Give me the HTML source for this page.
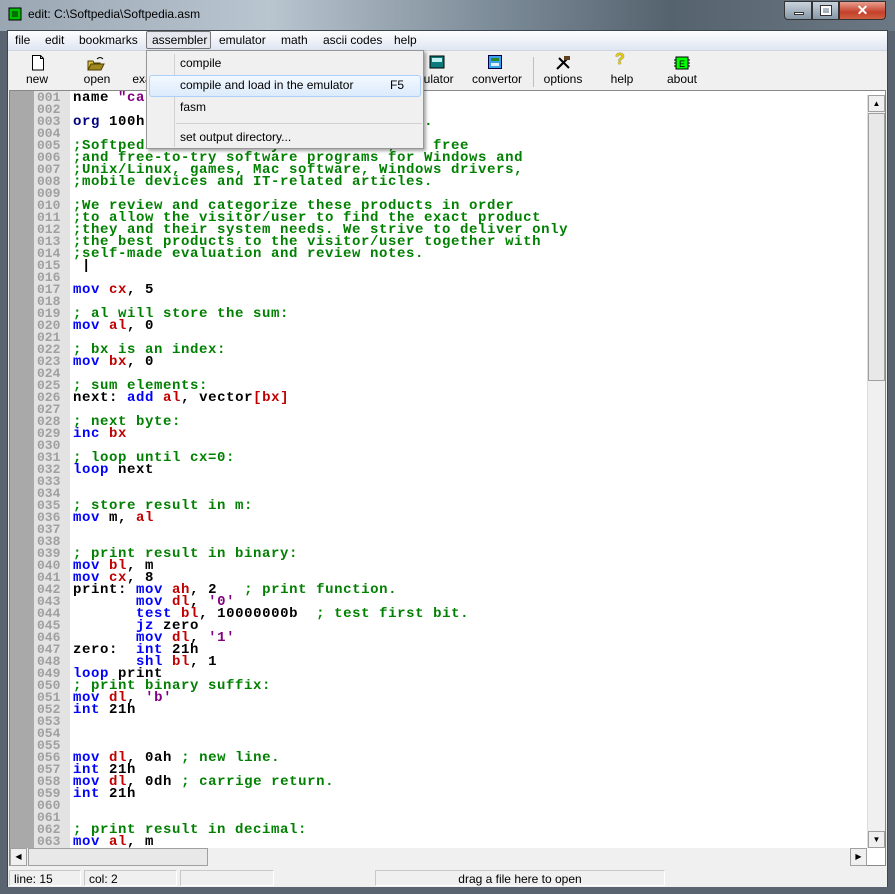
<!DOCTYPE html>
<html><head><meta charset="utf-8">
<style>
*{margin:0;padding:0;box-sizing:border-box}
body{width:895px;height:894px;overflow:hidden;background:#5a6470;font-family:"Liberation Sans",sans-serif;font-size:12px;position:relative}
.abs{position:absolute}
#title{left:0;top:0;width:895px;height:31px;background:linear-gradient(90deg,#9aa7b3 0%,#b9c5cf 30%,#7d8c99 55%,#55636f 75%,#6b7884 100%)}
#title .t{left:28px;top:7px;font-size:12px;color:#000}
#frame{left:7px;top:30px;width:881px;height:857px;background:#f0f0f0;border:1px solid #3c4650}
#menubar{left:8px;top:31px;width:879px;height:19px;background:linear-gradient(#fdfdfe,#dfe6f2);}
.mi{position:absolute;top:2px;font-size:12px;color:#000}
#toolbar{left:8px;top:50px;width:879px;height:40px;background:#f0f0f0;border-top:1px solid #cfd6e0}
.tb{position:absolute;top:21px;font-size:12px;text-align:center;width:60px;margin-left:-30px}
.ic{position:absolute;top:55px}
#ed{left:9px;top:90px;width:877px;height:776px;background:#fff;border:1px solid #888}
#gut1{left:10px;top:91px;width:24px;height:757px;background:#a9a9a9}
#gut2{left:34px;top:91px;width:36px;height:757px;background:#e3e3e3}
pre{position:absolute;font-family:"Liberation Mono",monospace;font-weight:bold;font-size:14px;line-height:12px;letter-spacing:0.6px;white-space:pre}
#nums{left:37px;top:92px;color:#a0a0a0;letter-spacing:0px;font-size:13px}
#code{left:73px;top:92px;color:#000}
.k{color:#0000ff}.r{color:#c00000}.c{color:#008000}.s{color:#800080}.d{color:#000080}
#vs{left:867px;top:95px;width:18px;height:753px;background:#f0f0f0;border-left:1px solid #ddd}
#hs{left:10px;top:848px;width:857px;height:18px;background:#f0f0f0}
.btn{position:absolute;background:#f0f0f0;border:1px solid #a0a0a0;}
#status{left:8px;top:867px;width:879px;height:20px;background:#f0f0f0}
.sp{position:absolute;top:3px;height:16px;border:1px solid #c8c8c8;border-bottom-color:#fff;border-right-color:#fff;font-size:12px;padding:1px 4px}
#dd{left:146px;top:50px;width:278px;height:99px;background:#f0f0f0;border:1px solid #979797;box-shadow:2px 2px 3px rgba(0,0,0,.35)}
#dd .it{position:absolute;left:33px;font-size:12px}
</style></head><body>
<div id="title" class="abs">
 <svg class="abs" style="left:8px;top:7px" width="14" height="14"><rect x="1" y="1" width="12" height="12" fill="#00c000" stroke="#000"/><rect x="4" y="4" width="6" height="6" fill="#007000"/></svg>
 <div class="t abs">edit: C:\Softpedia\Softpedia.asm</div>
 <div class="abs" style="left:784px;top:1px;width:28px;height:19px;border:1px solid #333;border-radius:0 0 0 4px;background:linear-gradient(#c9d3dd,#8797a6)"><div class="abs" style="left:9px;top:10px;width:10px;height:3px;background:#fff;border:1px solid #333"></div></div>
 <div class="abs" style="left:812px;top:1px;width:27px;height:19px;border:1px solid #333;background:linear-gradient(#c9d3dd,#8797a6)"><div class="abs" style="left:8px;top:4px;width:10px;height:9px;border:2px solid #fff;outline:1px solid #333"></div></div>
 <div class="abs" style="left:839px;top:1px;width:47px;height:19px;border:1px solid #333;border-radius:0 0 4px 0;background:linear-gradient(#e8a090,#c4402a 60%,#d06040);color:#fff;font-weight:bold;font-size:14px;text-align:center;line-height:17px">✕</div>
</div>
<div id="frame" class="abs"></div>
<div id="menubar" class="abs">
 <span class="mi" style="left:7px">file</span>
 <span class="mi" style="left:37px">edit</span>
 <span class="mi" style="left:71px">bookmarks</span>
 <div class="abs" style="left:138px;top:0px;width:65px;height:18px;border:1px solid #777;border-radius:2px;background:#e4e8ee"></div>
 <span class="mi" style="left:144px">assembler</span>
 <span class="mi" style="left:211px">emulator</span>
 <span class="mi" style="left:273px">math</span>
 <span class="mi" style="left:315px">ascii codes</span>
 <span class="mi" style="left:386px">help</span>
</div>
<div id="toolbar" class="abs">
 <span class="tb" style="left:29px">new</span>
 <span class="tb" style="left:89px">open</span>
 <span class="tb" style="left:150px">examples</span>
 <span class="tb" style="left:210px">compile</span>
 <span class="tb" style="left:300px">emulate</span>
 <span class="tb" style="left:420px">calculator</span>
 <span class="tb" style="left:489px">convertor</span>
 <div class="abs" style="left:525px;top:6px;width:1px;height:30px;background:#c0c0c0"></div>
 <span class="tb" style="left:555px">options</span>
 <span class="tb" style="left:614px">help</span>
 <span class="tb" style="left:674px">about</span>
</div>
<svg class="ic" style="left:31px" width="14" height="16"><path d="M1.5 .5h8l3 3v11.5h-11z" fill="#fff" stroke="#000"/><path d="M9.5 .5v3h3" fill="none" stroke="#000"/></svg>
<svg class="ic" style="left:87px" width="18" height="16"><path d="M1 6h5l1 2h6v7H1z" fill="#d8c040" stroke="#504000"/><path d="M1 15l3-6h13l-3 6z" fill="#a08820" stroke="#504000"/><path d="M10 4q3-3 6 0" fill="none" stroke="#000"/></svg>
<svg class="ic" style="left:429px" width="16" height="14"><rect x="1" y="1" width="14" height="12" fill="#0a7a7a" stroke="#000"/><rect x="3" y="3" width="10" height="4" fill="#c0f0f0"/></svg>
<svg class="ic" style="left:488px" width="14" height="14"><rect x=".5" y=".5" width="13" height="13" fill="#3aa0f0" stroke="#004"/><rect x="3" y="3" width="8" height="3" fill="#2a8a2a"/><rect x="3" y="8" width="8" height="3" fill="#e0f0ff"/></svg>
<svg class="ic" style="left:555px" width="16" height="16"><path d="M2 14L12 4M4 3l10 10" stroke="#000" stroke-width="2"/><path d="M9 1h6v4h-6z" fill="#604020"/></svg>
<div class="abs" style="left:615px;top:51px;font-weight:bold;font-size:16px;color:#e8d000;text-shadow:0 0 1px #000">?</div>
<svg class="ic" style="left:674px" width="16" height="16"><rect x="2" y="2" width="12" height="12" fill="#00ff00" stroke="#000"/><text x="5" y="12" font-size="9" font-family="Liberation Sans">E</text><path d="M0 5h2M0 8h2M0 11h2M14 5h2M14 8h2M14 11h2" stroke="#000"/></svg>
<div id="ed" class="abs"></div>
<div id="gut1" class="abs"></div>
<div id="gut2" class="abs"></div>
<pre id="nums">001
002
003
004
005
006
007
008
009
010
011
012
013
014
015
016
017
018
019
020
021
022
023
024
025
026
027
028
029
030
031
032
033
034
035
036
037
038
039
040
041
042
043
044
045
046
047
048
049
050
051
052
053
054
055
056
057
058
059
060
061
062
063</pre>
<pre id="code">name <span class="s">"calc-sum"</span>

<span class="d">org</span> 100h <span class="c">; directive make tiny com file.</span>

<span class="c">;Softpedia is a library of over 500,000 free
;and free-to-try software programs for Windows and
;Unix/Linux, games, Mac software, Windows drivers,
;mobile devices and IT-related articles.

;We review and categorize these products in order
;to allow the visitor/user to find the exact product
;they and their system needs. We strive to deliver only
;the best products to the visitor/user together with
;self-made evaluation and review notes.</span>
 |

<span class="k">mov</span> <span class="r">cx</span>, 5

<span class="c">; al will store the sum:</span>
<span class="k">mov</span> <span class="r">al</span>, 0

<span class="c">; bx is an index:</span>
<span class="k">mov</span> <span class="r">bx</span>, 0

<span class="c">; sum elements:</span>
next: <span class="k">add</span> <span class="r">al</span>, vector<span class="r">[bx]</span>

<span class="c">; next byte:</span>
<span class="k">inc</span> <span class="r">bx</span>

<span class="c">; loop until cx=0:</span>
<span class="k">loop</span> next


<span class="c">; store result in m:</span>
<span class="k">mov</span> m, <span class="r">al</span>


<span class="c">; print result in binary:</span>
<span class="k">mov</span> <span class="r">bl</span>, m
<span class="k">mov</span> <span class="r">cx</span>, 8
print: <span class="k">mov</span> <span class="r">ah</span>, 2   <span class="c">; print function.</span>
       <span class="k">mov</span> <span class="r">dl</span>, <span class="s">'0'</span>
       <span class="k">test</span> <span class="r">bl</span>, 10000000b  <span class="c">; test first bit.</span>
       <span class="k">jz</span> zero
       <span class="k">mov</span> <span class="r">dl</span>, <span class="s">'1'</span>
zero:  <span class="k">int</span> 21h
       <span class="k">shl</span> <span class="r">bl</span>, 1
<span class="k">loop</span> print
<span class="c">; print binary suffix:</span>
<span class="k">mov</span> <span class="r">dl</span>, <span class="s">'b'</span>
<span class="k">int</span> 21h



<span class="k">mov</span> <span class="r">dl</span>, 0ah <span class="c">; new line.</span>
<span class="k">int</span> 21h
<span class="k">mov</span> <span class="r">dl</span>, 0dh <span class="c">; carrige return.</span>
<span class="k">int</span> 21h


<span class="c">; print result in decimal:</span>
<span class="k">mov</span> <span class="r">al</span>, m</pre>
<div id="vs" class="abs">
 <div class="btn" style="left:0;top:0;width:17px;height:17px;font-size:8px;text-align:center;line-height:15px">▲</div>
 <div class="btn" style="left:0;top:18px;width:17px;height:268px;background:#e8e8e8"></div>
 <div class="btn" style="left:0;top:736px;width:17px;height:17px;font-size:8px;text-align:center;line-height:15px">▼</div>
</div>
<div id="hs" class="abs">
 <div class="btn" style="left:0;top:0;width:17px;height:18px;font-size:8px;text-align:center;line-height:16px">◀</div>
 <div class="btn" style="left:18px;top:0;width:180px;height:18px;background:#e8e8e8"></div>
 <div class="btn" style="left:840px;top:0;width:17px;height:18px;font-size:8px;text-align:center;line-height:16px">▶</div>
</div>
<div id="status" class="abs">
 <div class="sp" style="left:1px;width:72px">line: 15</div>
 <div class="sp" style="left:76px;width:93px">col: 2</div>
 <div class="sp" style="left:172px;width:94px"></div>
 <div class="sp" style="left:367px;width:290px;text-align:center">drag a file here to open</div>
</div>
<div id="dd" class="abs">
 <div class="abs" style="left:27px;top:3px;width:1px;height:93px;background:#d0d0d0"></div>
 <div class="abs" style="left:2px;top:24px;width:272px;height:22px;border:1px solid #aecff7;border-radius:3px;background:linear-gradient(#f2f8fe,#dcebfc)"></div>
 <span class="it" style="top:5px">compile</span>
 <span class="it" style="top:27px">compile and load in the emulator</span>
 <span class="abs" style="left:243px;top:27px">F5</span>
 <span class="it" style="top:49px">fasm</span>
 <div class="abs" style="left:29px;top:72px;width:246px;height:1px;background:#d0d0d0"></div>
 <span class="it" style="top:79px">set output directory...</span>
</div>
</body></html>
